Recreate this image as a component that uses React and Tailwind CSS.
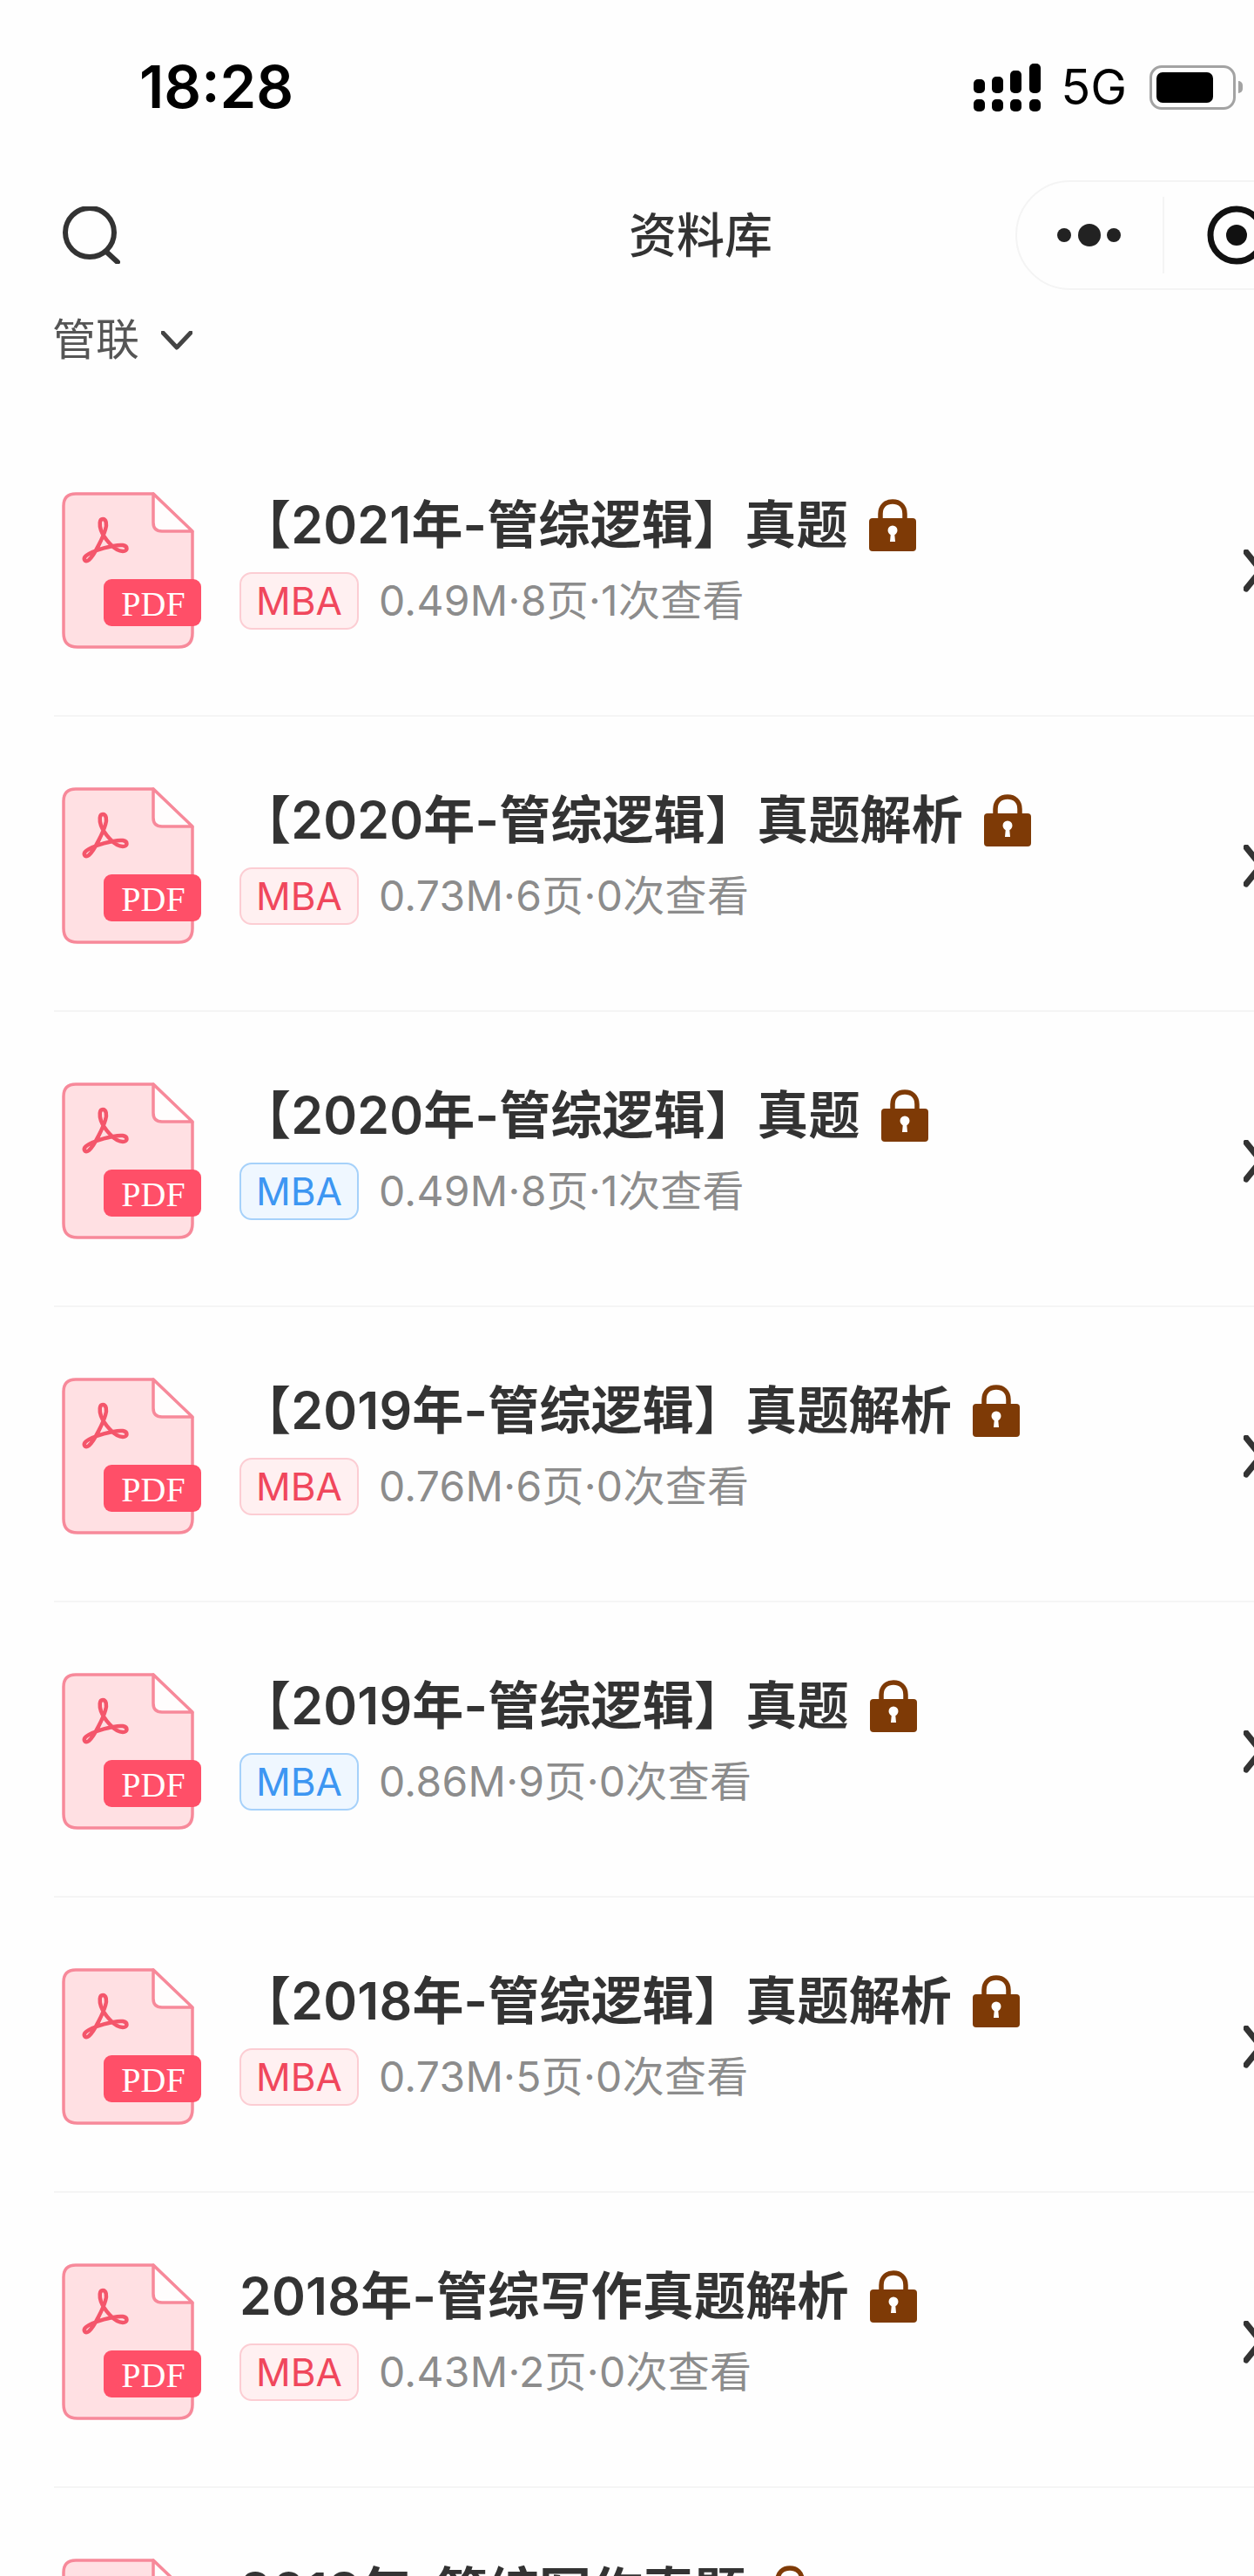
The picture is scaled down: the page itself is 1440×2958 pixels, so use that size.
const rows = [
  { title: '【2021年-管综逻辑】真题', meta: '0.49M·8页·1次查看', tag: 'red' },
  { title: '【2020年-管综逻辑】真题解析', meta: '0.73M·6页·0次查看', tag: 'red' },
  { title: '【2020年-管综逻辑】真题', meta: '0.49M·8页·1次查看', tag: 'blue' },
  { title: '【2019年-管综逻辑】真题解析', meta: '0.76M·6页·0次查看', tag: 'red' },
  { title: '【2019年-管综逻辑】真题', meta: '0.86M·9页·0次查看', tag: 'blue' },
  { title: '【2018年-管综逻辑】真题解析', meta: '0.73M·5页·0次查看', tag: 'red' },
  { title: '2018年-管综写作真题解析', meta: '0.43M·2页·0次查看', tag: 'red' },
  { title: '2018年-管综写作真题', meta: '0.43M·2页·0次查看', tag: 'red' },
];

const PdfIcon = () => (
  <svg width="160" height="180" viewBox="0 0 160 180" className="shrink-0">
    <path
      d="M16 2 H105 L150 46 V162 Q150 178 134 178 H18 Q2 178 2 162 V16 Q2 2 16 2 Z"
      fill="#ffe0e3"
      stroke="#f7899a"
      strokeWidth="3.5"
    />
    <path d="M105 2 V35 Q105 45 115 45 H150 Z" fill="#fffdfd" stroke="#f7899a" strokeWidth="3.5" strokeLinejoin="round" />
    <path
      d="M47 31 C51 31 52 37 50 43 C48 50 38 72 31 78 C26 82 24 76 28 73 C36 67 60 60 70 61 C76 62 76 68 70 68 C60 68 48 52 45 44 C43 38 43 31 47 31 Z"
      fill="none"
      stroke="#f4566b"
      strokeWidth="4.5"
    />
    <rect x="48" y="100" width="112" height="54" rx="9" fill="#ff4f68" />
    <text x="105" y="142" textAnchor="middle" fontSize="40" fill="#fff" fontFamily="'Liberation Serif', serif">PDF</text>
  </svg>
);

const Lock = () => (
  <svg width="54" height="60" viewBox="0 0 54 60" className="shrink-0">
    <path d="M13 24 V17 C13 8 19 3 27 3 C35 3 41 8 41 17 V24" fill="none" stroke="#7e3a06" strokeWidth="5.5" />
    <rect x="0" y="22" width="54" height="38" rx="4" fill="#7e3a06" />
    <circle cx="27" cy="36" r="5.5" fill="#fff" />
    <path d="M25 38 H29 L30 49 H24 Z" fill="#fff" />
  </svg>
);

const Row = ({ title, meta, tag }) => (
  <div className="flex items-start h-[339px] ml-[62px] pl-[9px] pt-[81px] border-b-2 border-[#f5f5f5]">
    <PdfIcon />
    <div className="flex flex-col ml-[44px] mt-[4px] w-[1153px] gap-[20px] shrink-0">
      <div className="flex items-center h-[68px] gap-[24px]">
        <span className="text-[59px] leading-[68px] font-semibold text-[#333] tracking-[0.2px] whitespace-nowrap">{title}</span>
        <Lock />
      </div>
      <div className="flex items-center gap-[23px]">
        {tag === 'blue' ? (
          <span className="flex items-center justify-center w-[137px] h-[66px] rounded-[14px] border-2 border-[#a6d1fa] bg-[#eff7ff] text-[44px] text-[#3d96f2]">MBA</span>
        ) : (
          <span className="flex items-center justify-center w-[137px] h-[66px] rounded-[14px] border-2 border-[#fccdd3] bg-[#fff0f1] text-[44px] text-[#f0475c]">MBA</span>
        )}
        <span className="text-[48px] leading-[66px] text-[#8c8c8c] tracking-[0.3px] whitespace-nowrap">{meta}</span>
      </div>
    </div>
    <svg width="12" height="50" viewBox="0 0 12 50" className="shrink-0 mt-[66px]">
      <path d="M3 3 L20 24 L3 45" fill="none" stroke="#333" strokeWidth="7" strokeLinecap="round" />
    </svg>
  </div>
);

export default function App() {
  return (
    <div className="h-[2958px] w-[1440px] overflow-hidden bg-[#fefefe] font-['Inter','Noto_Sans_CJK_SC',sans-serif]">
      {/* status bar */}
      <div className="flex items-center justify-between h-[200px] pl-[160px] pr-[13px]">
        <span className="text-[67px] font-semibold text-black">18:28</span>
        <div className="flex items-center">
          <svg width="77" height="55" viewBox="0 0 77 55">
            <rect x="0" y="41" width="13" height="14" rx="5" />
            <rect x="21" y="41" width="13" height="14" rx="5" />
            <rect x="42" y="41" width="13" height="14" rx="5" />
            <rect x="64" y="41" width="13" height="14" rx="5" />
            <rect x="0" y="18" width="13" height="16" rx="5" />
            <rect x="21" y="15" width="13" height="19" rx="5" />
            <rect x="42" y="8" width="13" height="26" rx="5" />
            <rect x="64" y="0" width="13" height="34" rx="5" />
          </svg>
          <span className="ml-[23px] text-[56px] text-black">5G</span>
          <div className="flex items-center ml-[26px]">
            <div className="w-[99px] h-[51px] rounded-[14px] border-[3px] border-[#a3a3a3] p-[5px]">
              <div className="w-[65px] h-full rounded-[7px] bg-black" />
            </div>
            <div className="w-[5px] h-[14px] ml-[3px] rounded-r-full bg-[#a3a3a3]" />
          </div>
        </div>
      </div>

      {/* nav bar */}
      <div className="flex items-center h-[140px] pl-[72px]">
        <svg width="66" height="66" viewBox="0 0 66 66" className="shrink-0">
          <circle cx="31" cy="30" r="28" fill="none" stroke="#333" strokeWidth="6" />
          <path d="M50 52 L63 64" stroke="#333" strokeWidth="6" strokeLinecap="round" />
        </svg>
        <span className="ml-[584px] text-[55px] font-medium text-[#333] whitespace-nowrap">资料库</span>
        <div className="flex items-center shrink-0 ml-[279px] w-[340px] h-[126px] rounded-full border-2 border-[#f4f4f4]">
          <svg width="78" height="28" viewBox="0 0 78 28" className="ml-[46px] shrink-0">
            <circle cx="8" cy="14" r="8" fill="#222" />
            <circle cx="37" cy="14" r="13" fill="#222" />
            <circle cx="65" cy="14" r="8" fill="#222" />
          </svg>
          <div className="w-[2px] h-[88px] ml-[43px] bg-[#f4f4f4]" />
          <svg width="68" height="68" viewBox="0 0 68 68" className="ml-[49px] shrink-0">
            <circle cx="34" cy="34" r="30" fill="none" stroke="#111" strokeWidth="7" />
            <circle cx="34" cy="34" r="12" fill="#111" />
          </svg>
        </div>
      </div>

      {/* filter */}
      <div className="flex items-start h-[144px] pl-[60px] pt-[20px]">
        <span className="text-[50px] leading-[60px] text-[#555]">管联</span>
        <svg width="36" height="22" viewBox="0 0 36 22" className="ml-[25px] mt-[20px]">
          <path d="M2 2 L18 19 L34 2" fill="none" stroke="#444" strokeWidth="5" strokeLinecap="round" strokeLinejoin="round" />
        </svg>
      </div>

      {rows.map((row, i) => (
        <Row key={i} {...row} />
      ))}
    </div>
  );
}
